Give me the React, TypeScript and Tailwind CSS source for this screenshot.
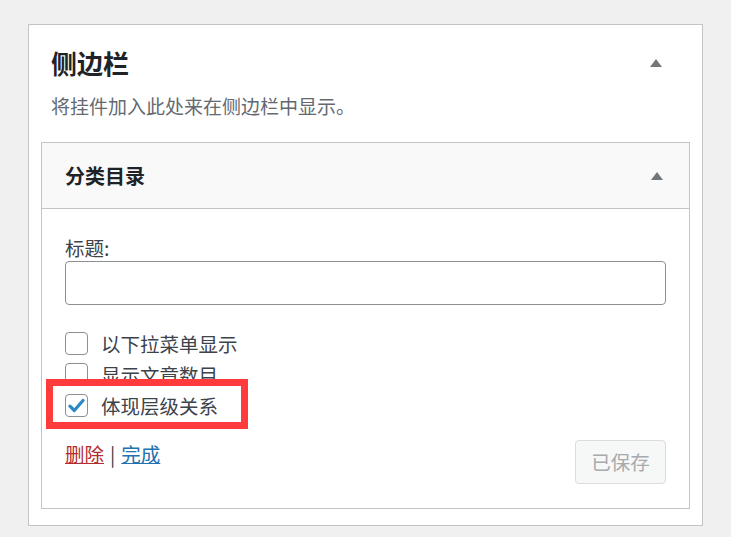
import { useState } from 'react'

const font = { fontFamily: '"Noto Sans CJK SC", "Noto Sans", sans-serif' }

function Caret() {
  return (
    <svg width="12" height="8" viewBox="0 0 12 8" className="shrink-0">
      <polygon points="6,0 12,8 0,8" fill="#72777c" />
    </svg>
  )
}

function Checkbox({ checked, label }: { checked: boolean; label: string }) {
  return (
    <label className="flex items-center h-[31px] gap-[13px]">
      <span className="w-[23px] h-[23px] rounded-[4px] border border-[#8c8f94] bg-white flex items-center justify-center">
        {checked && (
          <svg width="17" height="15" viewBox="0 0 17 15">
            <path d="M2 8.2 L6.3 12.5 L15 2.5" fill="none" stroke="#2a8bc4" strokeWidth="3.2" strokeLinecap="round" strokeLinejoin="round" />
          </svg>
        )}
      </span>
      <span className="text-[19.5px] leading-[28px] text-[#3c434a]">{label}</span>
    </label>
  )
}

export default function App() {
  const [title, setTitle] = useState('')

  return (
    <div className="min-h-screen bg-[#f0f0f1] pt-[24px] pl-[28px]" style={font}>
      <div className="w-[675px] bg-white border border-[#c3c4c7] px-3 pb-[16px]">
        {/* sidebar header */}
        <div className="flex items-center justify-between pl-[10px] pr-[28px] pt-[22px]">
          <h2 className="text-[26px] leading-[32px] font-bold text-[#1d2327]">侧边栏</h2>
          <Caret />
        </div>
        <p className="pl-[10px] mt-[13px] mb-[22px] text-[19px] leading-[28px] text-[#646970]">
          将挂件加入此处来在侧边栏中显示。
        </p>

        {/* widget */}
        <div className="border border-[#c3c4c7]">
          <div className="h-[66px] bg-[#f9f9f9] border-b border-[#c3c4c7] flex items-center justify-between pl-[23px] pr-[26px]">
            <h3 className="text-[20px] font-bold text-[#1d2327]">分类目录</h3>
            <Caret />
          </div>

          <div className="relative px-[23px] pt-[26px] pb-[24px]">
            <div className="text-[19.5px] leading-[26px] text-[#3c434a]">标题:</div>
            <input
              value={title}
              onChange={(e) => setTitle(e.target.value)}
              className="block w-full h-[44px] rounded-[4px] border border-[#8c8f94] bg-white px-2 outline-none"
            />

            <div className="mt-[23px]">
              <Checkbox checked={false} label="以下拉菜单显示" />
              <Checkbox checked={false} label="显示文章数目" />
              <Checkbox checked={true} label="体现层级关系" />
            </div>

            <div className="mt-[19px] flex items-start justify-between">
              <div className="text-[19.5px] leading-[28px]">
                <a href="#" className="text-[#b32d2e] underline">删除</a>
                <span className="text-[#3c434a] mx-[6px]">|</span>
                <a href="#" className="text-[#2271b1] underline">完成</a>
              </div>
              <button
                disabled
                className="w-[91px] h-[44px] rounded-[4px] border border-[#dcdcde] bg-[#f6f7f7] text-[19.5px] text-[#a7aaad]"
              >
                已保存
              </button>
            </div>

            {/* highlight annotation */}
            <div className="absolute left-[4px] top-[170px] w-[202px] h-[50px] border-[7px] border-[#ff3b3b] pointer-events-none" />
          </div>
        </div>
      </div>
    </div>
  )
}
